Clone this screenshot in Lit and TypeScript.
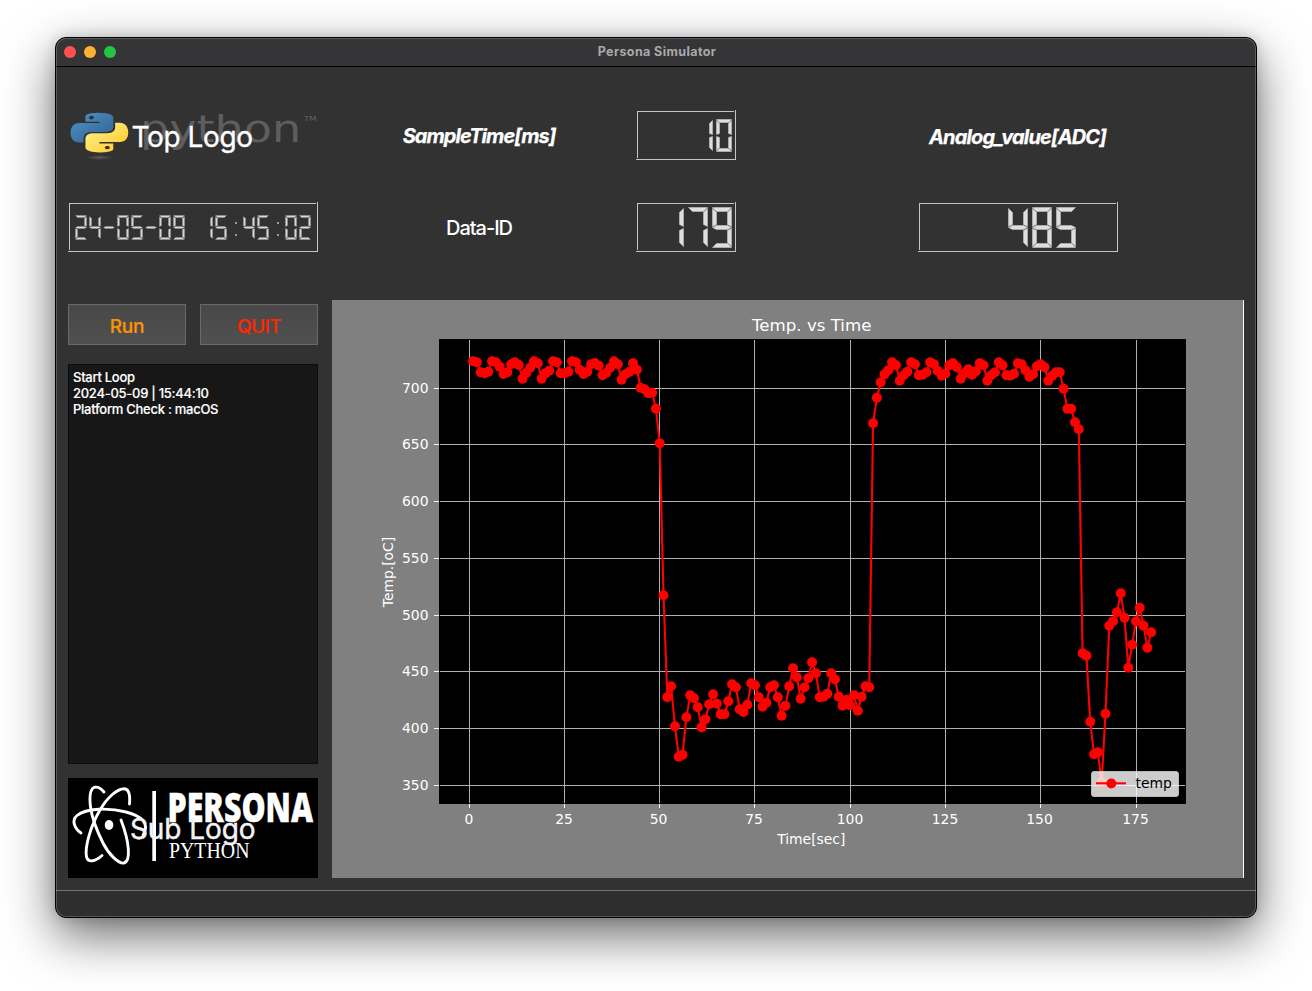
import { LitElement, html, svg, css } from "lit";
import { customElement, property } from "lit/decorators.js";

/** Seven-segment readout: one cell per character, right edge of the last cell fixed by the caller. */
const SEGMENTS: Record<string, number[]> = {
  "0": [0, 1, 2, 4, 5, 6], "1": [2, 5], "2": [0, 2, 3, 4, 6], "3": [0, 2, 3, 5, 6],
  "4": [1, 2, 3, 5], "5": [0, 1, 3, 5, 6], "6": [0, 1, 3, 4, 5, 6], "7": [0, 2, 5],
  "8": [0, 1, 2, 3, 4, 5, 6], "9": [0, 1, 2, 3, 5, 6], "-": [3], ":": [8, 9], " ": [],
};

function segment(id: number, L: number): number[][] {
  const w = Math.floor(L / 5);
  const h = Math.floor(w / 2);
  const at = (dx: number, dy: number, pts: number[][]) => pts.map(([x, y]) => [x + dx, y + dy]);
  switch (id) {
    case 0: return at(0, 0, [[0, 0], [L - 1, 0], [L - w - 1, w], [w, w]]);
    case 1: return at(0, 1, [[0, 0], [w, w], [w, L - h - 2], [0, L - 2]]);
    case 2: return at(L - 1, 1, [[0, 0], [0, L - 2], [-w, L - h - 2], [-w, w]]);
    case 3: return at(0, L, [[0, 0], [w, -h], [L - w - 1, -h], [L - 1, 0], [L - w - 1, h], [w, h]]);
    case 4: return at(0, L + 1, [[0, 0], [w, h], [w, L - w - 2], [0, L - 2]]);
    case 5: return at(L - 1, L + 1, [[0, 0], [0, L - 2], [-w, L - w - 2], [-w, h]]);
    case 6: return at(0, 2 * L, [[0, 0], [w, -w], [L - w - 1, -w], [L - 1, 0]]);
    case 8: return at(L / 2 - h + 1, Math.floor(L / 2) + w, [[0, 0], [w - 1, 0], [w - 1, 1 - w], [0, 1 - w]]);
    default: return at(L / 2 - h + 1, Math.floor((3 * L) / 2) + w, [[0, 0], [w - 1, 0], [w - 1, 1 - w], [0, 1 - w]]);
  }
}

@customElement("lcd-number")
export class LcdNumber extends LitElement {
  @property() value = "";
  @property({ type: Number }) width = 100;
  @property({ type: Number }) seg = 20;
  @property({ type: Number }) x = 0;
  @property({ type: Number }) y = 5;

  static styles = css`
    :host { display: block; height: 50px; }
    svg { display: block; }
    .edge { fill: #c4c4c4; }
    .seg { fill: #dedede; stroke: #b9b9b9; stroke-width: 0.7; stroke-linejoin: miter; stroke-miterlimit: 2; }
    .small { fill: #d6d6d6; stroke-width: 0.2; }
    .dot { stroke-width: 0.9; }
  `;

  render() {
    const w = this.width;
    const pitch = this.seg + Math.floor(this.seg / 5);
    return html`<svg width=${w} height="50" viewBox="0 0 ${w} 50" role="img" aria-label=${this.value}>
      <rect class="edge" x="1" y="1" width=${w - 3} height="1"></rect>
      <rect class="edge" x="1" y="1" width="1" height="47"></rect>
      <rect class="edge" x=${w - 1} y="0" width="1" height="50"></rect>
      <rect class="edge" x="0" y="49" width=${w} height="1"></rect>
      ${[...this.value].map((c, i) => (SEGMENTS[c] ?? []).map((s) => svg`<polygon class="seg ${s > 7 ? "dot" : this.seg < 14 ? "small" : ""}" points=${segment(s, this.seg)
        .map(([px, py]) => `${px + this.x + i * pitch + 0.5},${py + this.y + 0.5}`).join(" ")}></polygon>`))}
    </svg>`;
  }
}

/** Marker heights for samples 1..179: blocks of [first sample, offset, values in thirds of a pixel]. */
const BLOCKS: [number, number[]][] = [
  [330, [94, 97, 127, 130, 125, 94, 97, 110, 132, 127, 103, 97, 105, 146, 128, 113, 94, 100, 146, 130, 122, 94, 97, 130,
    130, 125, 94, 97, 119, 132, 125, 103, 99, 107, 136, 128, 113, 94, 103, 149, 133, 126, 100, 119, 173, 178, 190, 188,
    236, 340]],
  [580, [46, 352, 319, 439, 530, 524, 412, 346, 355, 382, 442, 418, 373, 343, 371, 403, 403, 364, 313, 322, 388, 396,
    374, 310, 316, 352, 380, 368, 322, 316, 352, 407, 377, 319, 265, 292, 356, 322, 295, 247, 280, 352, 350, 341, 280,
    298, 350, 377, 360, 376, 346, 392, 350, 319, 322]],
  [330, [280, 203, 157, 133, 121, 97, 106, 152, 136, 125, 97, 103, 136, 134, 127, 97, 103, 123, 137, 131, 106, 100, 112,
    146, 130, 118, 134, 124, 100, 106, 152, 136, 127, 97, 106, 136, 137, 131, 100, 103, 121, 140, 133, 109, 103, 112,
    152, 137, 127, 127, 176, 236, 236, 277, 298]],
  [560, [280, 287, 485, 583, 577, 667, 461, 197, 184, 157, 100, 173, 323, 254, 184, 143, 197, 263, 217]],
];
const POINTS = BLOCKS.flatMap(([base, v]) => v.map((t) => base + t / 3)).map((y, i) => [469.2 + (i + 1) * 3.81, y]);
const X_TICKS = [469, 564, 659, 754, 850, 945, 1040, 1136];
const Y_TICKS = [388, 444, 501, 558, 615, 671, 728, 785];

@customElement("temp-chart")
export class TempChart extends LitElement {
  static styles = css`
    :host { display: block; width: 912px; height: 578px; background: #808080; }
    svg { display: block; }
    text { font-family: "DejaVu Sans", sans-serif; font-size: 13.9px; fill: #fff; }
    .title { font-size: 16.67px; }
    .key { fill: #000; }
    .grid { fill: #b0b0b0; }
    .tick { fill: #fff; }
    .line { fill: none; stroke: #f00; stroke-width: 2.1; stroke-linejoin: round; }
    .dot { fill: #f00; }
    .legend { fill: #fff; fill-opacity: 0.8; stroke: #ccc; stroke-opacity: 0.8; }
  `;

  render() {
    return html`<svg width="912" height="578" viewBox="332 300 912 578">
      <rect x="439" y="339" width="747" height="465"></rect>
      ${X_TICKS.map((x, i) => svg`
        <rect class="grid" x=${x} y="340" width="1" height="463"></rect>
        <rect class="tick" x=${x} y="804" width="1" height="4"></rect>
        <text x=${x + (i === 2 || i > 5 ? -0.5 : 0)} y="824" text-anchor="middle">${i * 25}</text>`)}
      ${Y_TICKS.map((y, i) => svg`
        <rect class="grid" x="440" y=${y} width="745" height="1"></rect>
        <rect class="tick" x="434" y=${y} width="5" height="1"></rect>
        <text x="428.5" y=${y + 5} text-anchor="end">${700 - i * 50}</text>`)}
      <polyline class="line" points=${POINTS.map((p) => p.join(",")).join(" ")}></polyline>
      ${POINTS.map(([x, y]) => svg`<circle class="dot" cx=${x} cy=${y} r="5"></circle>`)}
      <rect class="legend" x="1091.5" y="771.5" width="87" height="25" rx="2.5"></rect>
      <line class="line" x1="1096" y1="783.3" x2="1126" y2="783.3"></line>
      <circle class="dot" cx="1111.3" cy="783.5" r="5"></circle>
      <text class="key" x="1135.500" y="788">temp</text>
      <text class="title" x="811.700" y="331" text-anchor="middle" textLength="119.500">Temp. vs Time</text>
      <text x="811.3" y="844" text-anchor="middle">Time[sec]</text>
      <text transform="translate(393 572) rotate(-90)" text-anchor="middle">Temp.[oC]</text>
      <rect class="tick" x="1243" y="300" width="1" height="578"></rect>
    </svg>`;
  }
}

@customElement("top-logo")
export class TopLogo extends LitElement {
  static styles = css`
    :host { display: block; width: 250px; height: 50px; }
    svg { display: block; overflow: visible; }
    .mark { font-family: "DejaVu Sans", sans-serif; font-size: 38px; fill: #5e5e5e; }
    .tm { font-family: "DejaVu Sans", sans-serif; font-size: 7px; fill: #646464; }
    .label { font-family: Inter, sans-serif; font-size: 28px; fill: #fff; stroke: #fff; stroke-width: 0.35; }
  `;

  render() {
    return html`<svg width="250" height="50" viewBox="68 110 250 50">
      <defs>
        <linearGradient id="blue" x1="0" y1="0" x2="1" y2="1"><stop offset="0" stop-color="#5093c8"></stop><stop offset="1" stop-color="#2f608d"></stop></linearGradient>
        <linearGradient id="gold" x1="0" y1="0" x2="1" y2="1"><stop offset="0.2" stop-color="#ffea80"></stop><stop offset="0.85" stop-color="#ffcf32"></stop></linearGradient>
        <radialGradient id="shade"><stop offset="0" stop-color="#707070" stop-opacity=".7"></stop><stop offset="1" stop-color="#606060" stop-opacity="0"></stop></radialGradient>
      </defs>
      <ellipse cx="99.5" cy="157.5" rx="15" ry="2.5" fill="url(#shade)"></ellipse>
      <g transform="translate(70.7 112.8) scale(2.39 1.65)">
        <path fill="url(#blue)" d="M14.25.18l.9.2.73.26.59.3.45.32.34.34.25.34.16.33.1.3.04.26.02.2-.01.13V8.5l-.05.63-.13.55-.21.46-.26.38-.3.31-.33.25-.35.19-.35.14-.33.1-.3.07-.26.04-.21.02H8.77l-.69.05-.59.14-.5.22-.41.27-.33.32-.27.35-.2.36-.15.37-.1.35-.07.32-.04.27-.02.21v3.06H3.17l-.21-.03-.28-.07-.32-.12-.35-.18-.36-.26-.36-.36-.35-.46-.32-.59-.28-.73-.21-.88-.14-1.05-.05-1.23.06-1.22.16-1.04.24-.87.32-.71.36-.57.4-.44.42-.33.42-.24.4-.16.36-.1.32-.05.24-.01h.16l.06.01h8.16v-.83H6.18l-.01-2.75-.02-.37.05-.34.11-.31.17-.28.25-.26.31-.23.38-.2.44-.18.51-.15.58-.12.64-.1.71-.06.77-.04.84-.02 1.27.05zm-6.3 1.98l-.23.33-.08.41.08.41.23.34.33.22.41.09.41-.09.33-.22.23-.34.08-.41-.08-.41-.23-.33-.33-.22-.41-.09-.41.09z"></path>
        <path fill="url(#gold)" d="M21.04 6.11l.28.06.32.12.35.18.36.27.36.35.35.47.32.59.28.73.21.88.14 1.04.05 1.23-.06 1.23-.16 1.04-.24.86-.32.71-.36.57-.4.45-.42.33-.42.24-.4.16-.36.09-.32.05-.24.02-.16-.01h-8.22v.82h5.84l.01 2.76.02.36-.05.34-.11.31-.17.29-.25.25-.31.24-.38.2-.44.17-.51.15-.58.13-.64.09-.71.07-.77.04-.84.01-1.27-.04-1.07-.14-.9-.2-.73-.25-.59-.3-.45-.33-.34-.34-.25-.34-.16-.33-.1-.3-.04-.25-.02-.2.01-.13v-5.34l.05-.64.13-.54.21-.46.26-.38.3-.32.33-.24.35-.2.35-.14.33-.1.3-.06.26-.04.21-.02.13-.01h5.84l.69-.05.59-.14.5-.21.41-.28.33-.32.27-.35.2-.36.15-.36.1-.35.07-.32.04-.28.02-.21V6.07h2.09l.14.01zm-6.47 14.25l-.23.33-.08.41.08.41.23.33.33.23.41.08.41-.08.33-.23.23-.33.08-.41-.08-.41-.23-.33-.33-.23-.41-.08-.41.08z"></path>
      </g>
      <text class="mark" transform="translate(140 142) scale(1.31 1)" x="0" y="0" textLength="123" lengthAdjust="spacingAndGlyphs">python</text>
      <text class="tm" x="304" y="121" textLength="12.500" lengthAdjust="spacingAndGlyphs">TM</text>
      <text class="label" x="131.500" y="146.800" textLength="121.500">Top Logo</text>
    </svg>`;
  }
}

@customElement("sub-logo")
export class SubLogo extends LitElement {
  static styles = css`
    :host { display: block; width: 250px; height: 100px; background: #000; }
    svg { display: block; }
    .orbit { fill: none; stroke: #fff; stroke-width: 2.9; stroke-linecap: round; }
    .solid, text { fill: #fff; }
    .persona { font-family: "Open Sans", sans-serif; font-weight: 800; font-size: 40.5px; stroke: #fff; stroke-width: 0.4; }
    .python { font-family: "Liberation Serif", serif; font-size: 22.5px; }
    .label { font-family: Inter, sans-serif; font-size: 28px; fill: #f4f4f4; stroke: #f4f4f4; stroke-width: 0.45; }
  `;

  render() {
    return html`<svg width="250" height="100" viewBox="68 778 250 100">
      <path class="orbit" d="M104 792C101 788.500 98 786.800 95 787.200C90 788.500 89.300 797 90.500 807C92 818 97 831 103 843C109 855 119 864 124 863C131 861 129.500 842 121 820"></path>
      <path class="orbit" d="M129.500 804C130.200 795 129 789 124.500 788.700C117 788.500 107 798 100 810C91 825 84.500 847 86.500 857C88.500 863.500 96 861 102 855.500"></path>
      <path class="orbit" d="M81 833C74 828 71.500 820 77 815.500C86 808 109 807.500 126 812C141 816 150.500 823 143 835"></path>
      <ellipse class="solid" cx="109" cy="825" rx="4.300" ry="5"></ellipse>
      <rect class="solid" x="152.300" y="791" width="3.700" height="70"></rect>
      <text class="persona" x="167.500" y="821.500" textLength="145.500" lengthAdjust="spacingAndGlyphs">PERSONA</text>
      <text class="python" x="169" y="858" textLength="80.500" lengthAdjust="spacingAndGlyphs">PYTHON</text>
      <text class="label" x="130" y="839" textLength="125.500">Sub Logo</text>
    </svg>`;
  }
}

@customElement("app-root")
export class AppRoot extends LitElement {
  static styles = css`
    :host { display: block; box-sizing: border-box; width: 1312px; height: 991px; padding: 37px 55px 73px; background: #fff; overflow: hidden; font-family: Inter, sans-serif; color: #fff; }
    .window { position: relative; box-sizing: border-box; width: 1202px; height: 881px; border: 1px solid #000; border-radius: 11px; overflow: hidden; background: #323232; display: flex; flex-direction: column; box-shadow: 0 18px 50px rgba(0, 0, 0, 0.58), 0 0 14px rgba(0, 0, 0, 0.16); }
    .window::after { content: ""; position: absolute; inset: 0; border-radius: 10px; box-shadow: inset 0 0 0 1px rgba(255, 255, 255, 0.2); pointer-events: none; }
    .bar { box-sizing: border-box; height: 29px; flex: none; display: grid; grid-template-columns: 1fr auto 1fr; align-items: center; background: #353537; border-bottom: 1px solid #000; }
    .lights { display: flex; gap: 8px; padding-left: 8px; }
    .light { width: 12px; height: 12px; border-radius: 50%; }
    .red { background: #ff514e; }
    .amber { background: #ffb132; }
    .green { background: #24c541; }
    .name { font-size: 12.5px; font-weight: 700; color: #a9a9aa; letter-spacing: 0.4px; margin: -2px -2px 0 0; }
    .main { flex: 1; display: grid; grid-template-columns: 250px 912px; column-gap: 14px; padding: 43px 12px 12px; }
    .side { display: flex; flex-direction: column; }
    .clock { margin-top: 42px; }
    .buttons { display: flex; gap: 14px; margin-top: 52px; }
    button { box-sizing: border-box; width: 118px; height: 41px; padding: 3px 0 0; border: 1px solid #696969; background: linear-gradient(#484848, #505050); font: 500 19px Inter, sans-serif; letter-spacing: -0.3px; -webkit-text-stroke: 0.2px; }
    .run { color: #ff9300; }
    .quit { color: #ff2600; letter-spacing: -0.5px; }
    .log { box-sizing: border-box; height: 400px; margin-top: 19px; padding: 4px; background: #171717; border: 1px solid #0d0d0d; font-size: 13px; font-weight: 500; line-height: 16px; letter-spacing: -0.27px; -webkit-text-stroke: 0.15px; }
    .sub { margin-top: 14px; }
    .work { display: flex; flex-direction: column; }
    .fields { height: 190px; display: grid; grid-template: 50px 50px / 294px 120px 1fr; row-gap: 42px; align-items: center; justify-items: center; }
    .head { font-size: 20px; font-weight: 700; font-style: italic; line-height: 24px; padding-top: 2px; letter-spacing: -0.95px; -webkit-text-stroke: 0.25px; }
    .id { font-size: 20px; font-weight: 500; line-height: 24px; padding-top: 2px; letter-spacing: -1.05px; }
    .adc { justify-self: start; width: 356px; text-align: center; margin-left: 93.5px; padding-top: 3px; letter-spacing: -0.85px; }
    .adc-value { justify-self: start; margin-left: 172px; }
    .status { height: 26px; flex: none; border-top: 1px solid #707070; background: #2e2e2e; }
  `;

  render() {
    return html`<div class="window">
      <div class="bar">
        <div class="lights"><span class="light red"></span><span class="light amber"></span><span class="light green"></span></div>
        <div class="name">Persona Simulator</div>
      </div>
      <div class="main">
        <div class="side">
          <top-logo></top-logo>
          <lcd-number class="clock" value="24-05-09 15:45:02" width="250" seg="12" x="7" y="13"></lcd-number>
          <div class="buttons"><button class="run">Run</button><button class="quit">QUIT</button></div>
          <div class="log"><div>Start Loop</div><div>2024-05-09 | 15:44:10</div><div>Platform Check : macOS</div></div>
          <sub-logo class="sub"></sub-logo>
        </div>
        <div class="work">
          <div class="fields">
            <div class="head">SampleTime[ms]</div>
            <lcd-number value="10" width="100" seg="16" x="61" y="9"></lcd-number>
            <div class="head adc">Analog_value[ADC]</div>
            <div class="id">Data-ID</div>
            <lcd-number value="179" width="100" seg="20" x="28" y="5"></lcd-number>
            <lcd-number class="adc-value" value="485" width="200" seg="20" x="90" y="5"></lcd-number>
          </div>
          <temp-chart></temp-chart>
        </div>
      </div>
      <div class="status"></div>
    </div>`;
  }
}
